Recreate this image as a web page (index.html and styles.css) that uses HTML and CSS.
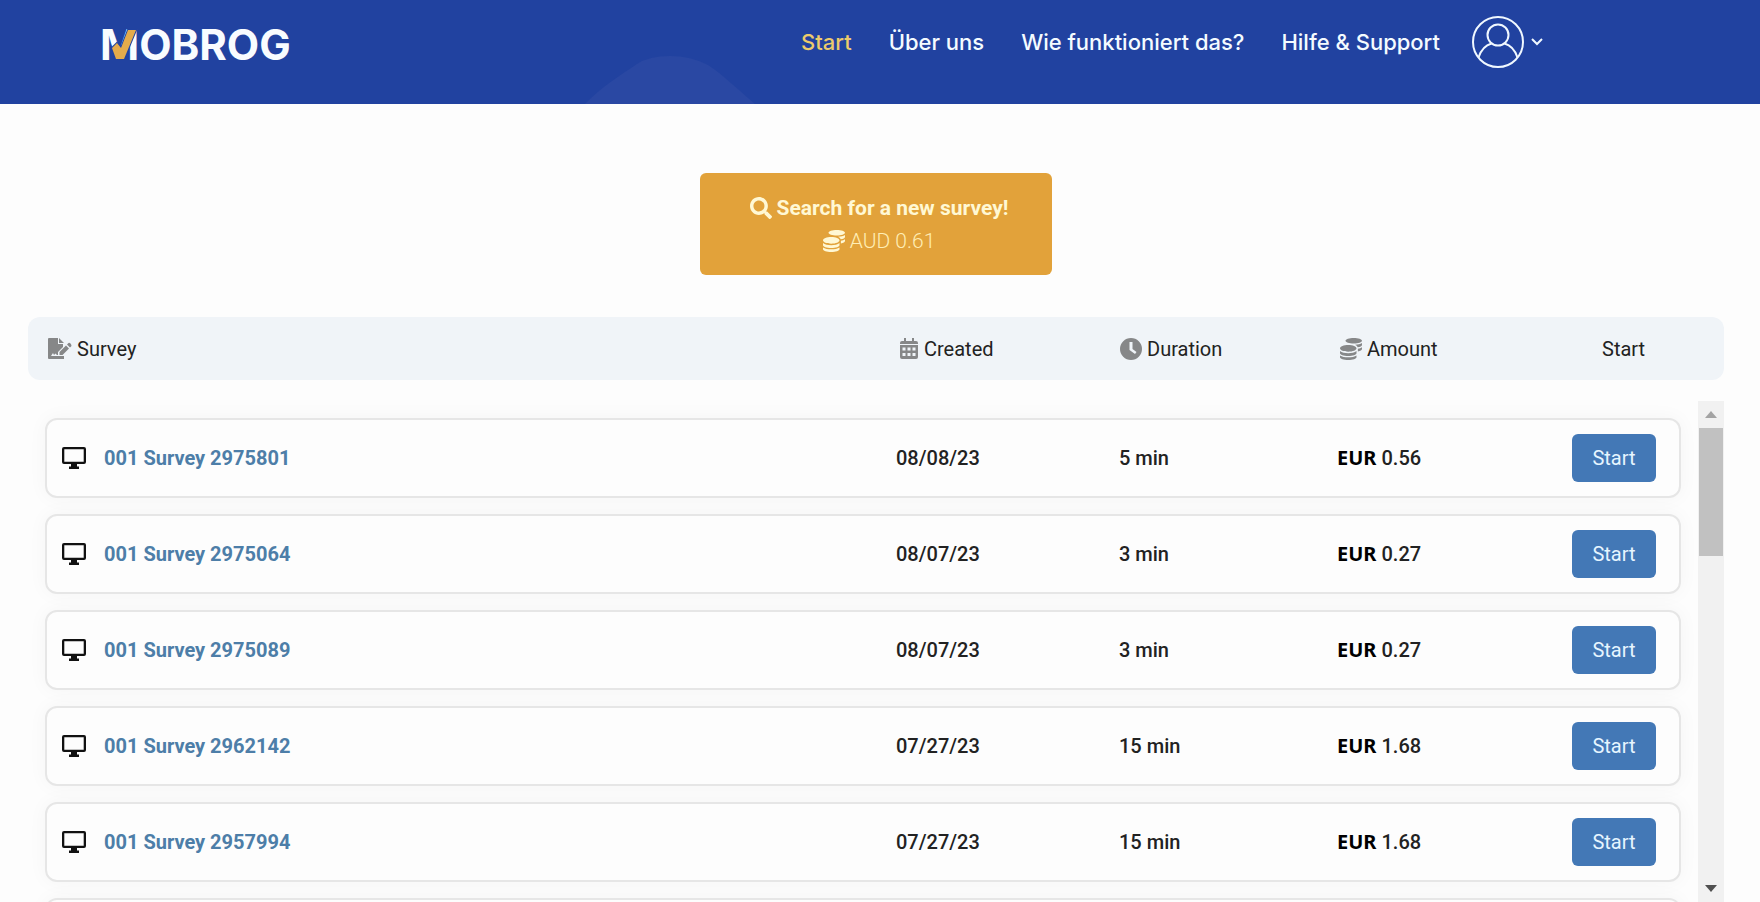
FILE: index.html
```html
<!DOCTYPE html>
<html lang="de">
<head>
<meta charset="utf-8">
<meta name="viewport" content="width=device-width, initial-scale=1">
<title>MOBROG</title>
<link rel="stylesheet" href="styles.css">
</head>
<body>
<svg class="defs" aria-hidden="true">
  <symbol id="coins" viewBox="0 0 512 512"><path d="M0 405.3V448c0 35.3 86 64 192 64s192-28.7 192-64v-42.7C342.7 434.4 267.2 448 192 448S41.3 434.4 0 405.3zM320 128c106 0 192-28.7 192-64S426 0 320 0 128 28.7 128 64s86 64 192 64zM0 300.4V352c0 35.3 86 64 192 64s192-28.7 192-64v-51.6c-41.3 34-116.9 51.6-192 51.6S41.3 334.4 0 300.4zm416 11c57.3-11.1 96-31.7 96-55.4v-42.7c-23.2 16.4-57.3 27.6-96 34.5v63.6zM192 160C86 160 0 195.8 0 240s86 80 192 80 192-35.8 192-80-86-80-192-80zm219.3 56.3c60-10.8 100.7-32 100.7-56.3v-42.7c-35.5 25.1-96.5 38.6-160.7 41.8 29.5 14.3 51.2 33.5 60 57.2z"/></symbol>
  <symbol id="monitor" viewBox="0 0 24 22"><path fill-rule="evenodd" d="M2 0h20a2 2 0 0 1 2 2v13a2 2 0 0 1-2 2h-7v2.500h2V22H7v-2.500h2V17H2a2 2 0 0 1-2-2V2a2 2 0 0 1 2-2zm.300 2.300v12.400h19.400V2.300z"/></symbol>
</svg>

<header class="topbar">
  <svg class="hill" viewBox="0 0 170 48" aria-hidden="true"><path d="M0 48C18 30 34 20 52 8Q64 0 85 0t38 9c18 12 31 26 47 39z"/></svg>
  <a class="logo" href="#">MOBROG
    <svg class="logo-check" viewBox="0 0 26 32" aria-hidden="true"><path d="M17 1h8L13 30H5L1 19l5-5 4 5z"/></svg>
  </a>
  <nav class="nav">
    <a class="active" href="#">Start</a>
    <a href="#">Über uns</a>
    <a href="#">Wie funktioniert das?</a>
    <a href="#">Hilfe &amp; Support</a>
  </nav>
  <button class="account" type="button" aria-label="Konto">
    <svg class="avatar" viewBox="0 0 52 52" aria-hidden="true"><circle cx="26" cy="26" r="25"/><circle cx="26" cy="19" r="10.500"/><path d="M6.500 41.500C9 34 14 29 19.500 27.500M32.500 27.500C38 29 43 34 45.500 41.500"/></svg>
    <svg class="chevron" viewBox="0 0 12 8" aria-hidden="true"><path d="M1 1l5 5 5-5"/></svg>
  </button>
</header>

<main class="content">
  <button class="search" type="button">
    <span class="search-title"><svg class="icon" viewBox="0 0 512 512" aria-hidden="true"><path d="M505 442.700L405.300 343c-4.500-4.500-10.600-7-17-7H372c27.600-35.300 44-79.700 44-128C416 93.100 322.900 0 208 0S0 93.100 0 208s93.100 208 208 208c48.300 0 92.700-16.400 128-44v16.300c0 6.400 2.500 12.500 7 17l99.700 99.700c9.400 9.400 24.600 9.400 33.900 0l28.300-28.300c9.400-9.400 9.400-24.600.1-34zM208 336c-70.700 0-128-57.200-128-128 0-70.700 57.200-128 128-128 70.700 0 128 57.200 128 128 0 70.700-57.200 128-128 128z"/></svg>Search for a new survey!</span>
    <span class="search-amount"><svg class="icon" aria-hidden="true"><use href="#coins"/></svg>AUD 0.61</span>
  </button>

  <section class="surveys">
    <table class="table">
      <thead>
        <tr>
          <th scope="col"><svg class="icon wide" viewBox="0 0 24 22" aria-hidden="true"><path fill-rule="evenodd" d="M1 0h9v6h5v3l-5 5v3H9l-1.500-1.500L6 17l-1-2-2 3h13v3H1a1 1 0 0 1-1-1V1a1 1 0 0 1 1-1zM11 0l5 5h-5zM11.500 14l6.500-6.500 3 3-6.500 6.500h-3zM19 6.500l1.500-1.500q1-.500 2 .500t1 2.500L22 9.500z"/></svg>Survey</th>
          <th scope="col"><svg class="icon slim" viewBox="0 0 18 21" aria-hidden="true"><path fill-rule="evenodd" d="M4 0h2v3h6V0h2v3h2a2 2 0 0 1 2 2v1H0V5a2 2 0 0 1 2-2h2zM0 7h18v12a2 2 0 0 1-2 2H2a2 2 0 0 1-2-2zm2.500 2.500v3h3v-3zm5 0v3h3v-3zm5 0v3h3v-3zM2.500 15v3h3v-3zm5 0v3h3v-3zm5 0v3h3v-3z"/></svg>Created</th>
          <th scope="col"><svg class="icon" viewBox="0 0 22 22" aria-hidden="true"><path fill-rule="evenodd" d="M11 0a11 11 0 1 1 0 22 11 11 0 0 1 0-22zM9.500 4v8l5.500 4 1.500-2-4-3V4z"/></svg>Duration</th>
          <th scope="col"><svg class="icon" aria-hidden="true"><use href="#coins"/></svg>Amount</th>
          <th scope="col">Start</th>
        </tr>
      </thead>
      <tbody>
        <tr>
          <td class="name"><svg class="monitor" aria-hidden="true"><use href="#monitor"/></svg><a href="#">001 Survey 2975801</a></td>
          <td>08/08/23</td><td>5 min</td>
          <td class="amount"><b>EUR</b>0.56</td>
          <td><button class="start" type="button">Start</button></td>
        </tr>
        <tr>
          <td class="name"><svg class="monitor" aria-hidden="true"><use href="#monitor"/></svg><a href="#">001 Survey 2975064</a></td>
          <td>08/07/23</td><td>3 min</td>
          <td class="amount"><b>EUR</b>0.27</td>
          <td><button class="start" type="button">Start</button></td>
        </tr>
        <tr>
          <td class="name"><svg class="monitor" aria-hidden="true"><use href="#monitor"/></svg><a href="#">001 Survey 2975089</a></td>
          <td>08/07/23</td><td>3 min</td>
          <td class="amount"><b>EUR</b>0.27</td>
          <td><button class="start" type="button">Start</button></td>
        </tr>
        <tr>
          <td class="name"><svg class="monitor" aria-hidden="true"><use href="#monitor"/></svg><a href="#">001 Survey 2962142</a></td>
          <td>07/27/23</td><td>15 min</td>
          <td class="amount"><b>EUR</b>1.68</td>
          <td><button class="start" type="button">Start</button></td>
        </tr>
        <tr>
          <td class="name"><svg class="monitor" aria-hidden="true"><use href="#monitor"/></svg><a href="#">001 Survey 2957994</a></td>
          <td>07/27/23</td><td>15 min</td>
          <td class="amount"><b>EUR</b>1.68</td>
          <td><button class="start" type="button">Start</button></td>
        </tr>
        <tr><td></td></tr>
      </tbody>
    </table>
    <div class="scrollbar" aria-hidden="true">
      <span class="arrow up"></span>
      <span class="thumb"></span>
      <span class="arrow down"></span>
    </div>
  </section>
</main>
</body>
</html>
```
FILE: styles.css
```css
* { box-sizing: border-box; }

body {
  margin: 0;
  height: 100vh;
  display: flex;
  flex-direction: column;
  overflow: hidden;
  background: #fdfdfd;
  color: #222;
  font-family: Roboto, "Liberation Sans", sans-serif;
  font-size: 20px;
}

button { font: inherit; cursor: pointer; border: 0; }
a { text-decoration: none; }
.defs { position: absolute; width: 0; height: 0; }

/* Top bar */
.topbar {
  position: relative;
  flex: none;
  display: flex;
  align-items: flex-start;
  min-height: 104px;
  padding: 16px 217px 0 100px;
  background: #2142a0;
  font-family: Inter, "Liberation Sans", sans-serif;
}
.hill {
  position: absolute;
  left: 585px;
  bottom: 0;
  width: 170px;
  height: 48px;
  fill: #2a48a3;
}
.logo {
  position: relative;
  margin-right: auto;
  color: #f8fcff;
  font-size: 42px;
  font-weight: 700;
  line-height: 58px;
}
.logo-check {
  position: absolute;
  left: 11px;
  top: 13px;
  width: 26px;
  height: 32px;
  fill: #e4ab4b;
  stroke: #2142a0;
  stroke-width: 2;
  paint-order: stroke;
}
.nav {
  display: flex;
  gap: 37px;
  line-height: 52px;
  font-size: 22px;
  font-weight: 500;
}
.nav a { color: #f4fbff; white-space: nowrap; }
.nav .active { color: #eccb6c; }
.account {
  display: flex;
  align-items: center;
  gap: 7px;
  margin-left: 32px;
  padding: 0;
  background: none;
}
.avatar, .chevron { fill: none; stroke: #f0f8ff; }
.avatar { width: 52px; height: 52px; stroke-width: 2; }
.chevron { width: 12px; height: 8px; stroke-width: 2; }

/* Content */
.content {
  flex: 1;
  min-height: 0;
  display: flex;
  flex-direction: column;
  padding: 69px 36px 0 28px;
}
.icon {
  width: 22px;
  height: 22px;
  margin-right: 5px;
  flex: none;
  fill: #868788;
}
.icon.slim { width: 18px; height: 21px; margin-right: 6px; }
.icon.wide { width: 24px; }

.search {
  flex: none;
  align-self: center;
  display: flex;
  flex-direction: column;
  align-items: center;
  gap: 1px;
  margin-bottom: 42px;
  padding: 19px 44px 18px 50px;
  border-radius: 6px;
  background: #e2a23a;
  color: #fff8d4;
  font-size: 21px;
  line-height: 32px;
}
.search span { display: flex; align-items: center; }
.search .icon { fill: #fff8d4; }
.search-title { font-weight: 700; }
.search-amount { font-weight: 300; color: #ffeeb5; }

/* Survey table */
.surveys {
  position: relative;
  flex: 1;
  min-height: 0;
}
.table { display: flex; flex-direction: column; height: 100%; }
thead, tbody { display: block; }
tr { display: grid; align-items: center; }
th, td { display: flex; align-items: center; padding: 0; text-align: left; }

thead tr {
  grid-template-columns: 1fr 220px 220px 262px 102px;
  height: 63px;
  padding: 0 20px;
  border-radius: 12px;
  background: #f0f4f8;
}
th { font-weight: 400; line-height: 24px; }

tbody {
  flex: 1;
  min-height: 0;
  overflow: hidden;
  margin-top: 21px;
  padding: 17px 43px 0 17px;
}
tbody tr {
  grid-template-columns: 1fr 223px 218px 235px 84px;
  height: 80px;
  margin-bottom: 16px;
  padding: 0 23px 0 15px;
  border: 2px solid #e6e6e6;
  border-radius: 12px;
  background: #fdfdfd;
  box-shadow: 0 0 20px rgba(0, 0, 0, 0.04);
}
td { font-weight: 500; line-height: 24px; }
.name { gap: 18px; }
.name a { color: #4d7ea8; font-weight: 700; }
.monitor { width: 24px; height: 22px; fill: #111; }
.amount b {
  margin-right: 5px;
  color: #000;
  font-family: "Noto Sans", "Open Sans", sans-serif;
  font-weight: 700;
}
.start {
  width: 84px;
  height: 48px;
  padding: 0;
  border-radius: 6px;
  background: #4378b6;
  color: #e6f5ff;
  font-weight: 400;
}

/* Scroll track laid over the right edge of the list */
.scrollbar {
  position: absolute;
  top: 84px;
  right: 0;
  bottom: 0;
  width: 26px;
  display: flex;
  flex-direction: column;
  align-items: center;
  background: #f1f1f1;
}
.thumb { width: 24px; height: 128px; background: #c1c1c1; }
.arrow {
  display: flex;
  align-items: center;
  justify-content: center;
  height: 27px;
}
.arrow::before {
  content: "";
  border: 6px solid transparent;
  border-top-width: 0;
  border-bottom: 7px solid #a3a3a3;
}
.arrow.down { margin-top: auto; }
.arrow.down::before {
  border-top: 7px solid #505050;
  border-bottom-width: 0;
}
```
